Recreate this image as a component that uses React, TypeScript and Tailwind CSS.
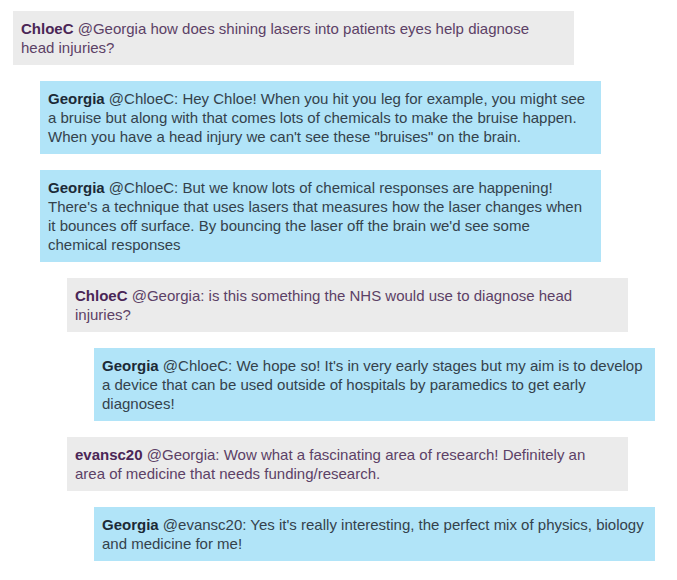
const comments = [
  {
    level: 0,
    tone: "gray",
    name: "ChloeC",
    lines: ["@Georgia how does shining lasers into patients eyes help diagnose", "head injuries?"],
  },
  {
    level: 1,
    tone: "blue",
    name: "Georgia",
    lines: [
      "@ChloeC: Hey Chloe! When you hit you leg for example, you might see",
      "a bruise but along with that comes lots of chemicals to make the bruise happen.",
      'When you have a head injury we can\'t see these "bruises" on the brain.',
    ],
  },
  {
    level: 1,
    tone: "blue",
    name: "Georgia",
    lines: [
      "@ChloeC: But we know lots of chemical responses are happening!",
      "There's a technique that uses lasers that measures how the laser changes when",
      "it bounces off surface. By bouncing the laser off the brain we'd see some",
      "chemical responses",
    ],
  },
  {
    level: 2,
    tone: "gray",
    name: "ChloeC",
    lines: ["@Georgia: is this something the NHS would use to diagnose head", "injuries?"],
  },
  {
    level: 3,
    tone: "blue",
    name: "Georgia",
    lines: [
      "@ChloeC: We hope so! It's in very early stages but my aim is to develop",
      "a device that can be used outside of hospitals by paramedics to get early",
      "diagnoses!",
    ],
  },
  {
    level: 2,
    tone: "gray",
    name: "evansc20",
    lines: [
      "@Georgia: Wow what a fascinating area of research! Definitely an",
      "area of medicine that needs funding/research.",
    ],
  },
  {
    level: 3,
    tone: "blue",
    name: "Georgia",
    lines: ["@evansc20: Yes it's really interesting, the perfect mix of physics, biology", "and medicine for me!"],
  },
]

const indent = ["ml-0", "ml-[27px]", "ml-[54px]", "ml-[81px]"]

export default function App() {
  return (
    <main
      className="w-[677px] h-[580px] bg-white pt-[11px] pl-[13px] flex flex-col gap-4 overflow-hidden"
      style={{ fontFamily: '"Liberation Sans", Arial, sans-serif' }}
    >
      {comments.map((c, i) => (
        <div
          key={i}
          className={`${indent[c.level]} w-[561px] px-2 py-2 text-[15px] leading-[19px] whitespace-nowrap ${
            c.tone === "gray" ? "bg-[#ebebeb] text-[#5c4166]" : "bg-[#b1e4f8] text-[#34424c]"
          }`}
        >
          {c.lines.map((line, j) => (
            <div key={j}>
              {j === 0 && (
                <span className={`font-bold ${c.tone === "gray" ? "text-[#4a2656]" : "text-[#1c2a36]"}`}>
                  {c.name}{" "}
                </span>
              )}
              {line}
            </div>
          ))}
        </div>
      ))}
    </main>
  )
}
